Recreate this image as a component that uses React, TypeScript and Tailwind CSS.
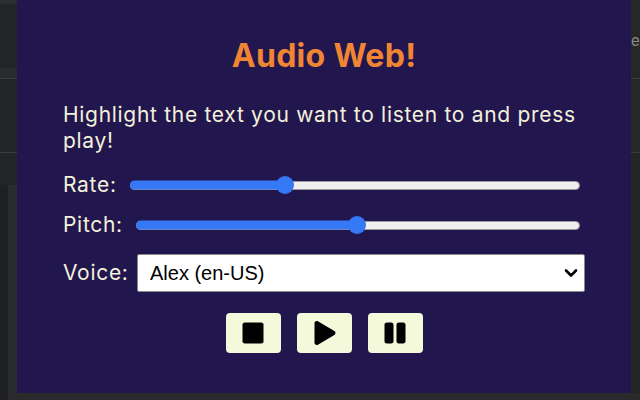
import React from "react";
import { FaStop, FaPlay, FaPause } from "react-icons/fa";

function Slider({ pct }: { pct: number }) {
  return (
    <div className="relative flex h-[18px] flex-1 items-center">
      <div className="h-[9px] w-full rounded-full border border-[#9a9a9a] bg-[#efefef]" />
      <div
        className="absolute left-0 top-1/2 h-[9px] -translate-y-1/2 rounded-l-full bg-[#3478f6]"
        style={{ width: `${pct}%` }}
      />
      <div
        className="absolute top-1/2 h-[18px] w-[18px] -translate-x-1/2 -translate-y-1/2 rounded-full bg-[#3478f6]"
        style={{ left: `${pct}%` }}
      />
    </div>
  );
}

export default function App() {
  return (
    <div
      className="flex h-[400px] w-[640px] flex-col overflow-hidden bg-[#232427]"
      style={{ fontFamily: "Inter, 'Noto Sans', sans-serif" }}
    >
      <div className="flex h-[393px]">
        {/* left page strip */}
        <div className="flex w-[17px] flex-col">
          <div className="h-[4px] bg-[#2c2d30]" />
          <div className="h-[64px] bg-[#232427]" />
          <div className="h-[10px] bg-[#2a2b2e]" />
          <div className="h-px bg-[#3b3c3f]" />
          <div className="h-[73px] bg-[#232427]" />
          <div className="h-px bg-[#3a3b3e]" />
          <div className="h-[32px] bg-[#232427]" />
          <div className="flex flex-1">
            <div className="w-[8px] bg-[#1f2023]" />
            <div className="flex-1 bg-[#2a2b2d]" />
          </div>
        </div>

        {/* popup panel */}
        <div className="flex w-[614px] flex-col bg-[#22164f] px-[46px]">
          <h1 className="mt-[37px] text-center text-[32px] font-bold leading-[38px] tracking-[0.3px] text-[#f08533]">
            Audio Web!
          </h1>
          <p className="mt-[27px] text-[21px] leading-[26px] tracking-[0.7px] text-[#f3f1d9]">
            Highlight the text you want to listen to and press play!
          </p>

          <div className="mt-[19px] flex h-[24px] items-center text-[21px] tracking-[0.7px] text-[#f3f1d9]">
            <span className="w-[67px]">Rate:</span>
            <div className="mr-[5px] flex flex-1">
              <Slider pct={34.4} />
            </div>
          </div>

          <div className="mt-[16px] flex h-[24px] items-center text-[21px] tracking-[0.7px] text-[#f3f1d9]">
            <span className="w-[73px]">Pitch:</span>
            <div className="mr-[5px] flex flex-1">
              <Slider pct={49.8} />
            </div>
          </div>

          <div className="mt-[17px] flex h-[38px] items-center text-[21px] tracking-[0.7px] text-[#f3f1d9]">
            <span className="w-[74px]">Voice:</span>
            <div className="relative h-[38px] flex-1">
              <select
                className="h-full w-full appearance-none rounded-[2px] border border-[#8a8a8a] bg-white pl-[12px] text-[20px] tracking-normal text-black outline-none"
                style={{ fontFamily: "'Liberation Sans', Arial, sans-serif" }}
                defaultValue="alex"
              >
                <option value="alex">Alex (en-US)</option>
              </select>
              <svg
                className="pointer-events-none absolute right-[7px] top-1/2 -translate-y-1/2"
                width="14"
                height="10"
                viewBox="0 0 14 10"
              >
                <path d="M2 2.5 L7 7.5 L12 2.5" fill="none" stroke="#000" strokeWidth="2.6" strokeLinecap="round" strokeLinejoin="round" />
              </svg>
            </div>
          </div>

          <div className="mt-[21px] flex justify-center gap-[16px]">
            <button className="flex h-[40px] w-[55px] items-center justify-center rounded-[4px] bg-[#f4f9dc]">
              <FaStop size={24} color="#000" />
            </button>
            <button className="flex h-[40px] w-[55px] items-center justify-center rounded-[4px] bg-[#f4f9dc]">
              <FaPlay size={24} color="#000" className="ml-[2px]" />
            </button>
            <button className="flex h-[40px] w-[55px] items-center justify-center rounded-[4px] bg-[#f4f9dc]">
              <FaPause size={24} color="#000" />
            </button>
          </div>
        </div>

        {/* right page strip */}
        <div className="flex w-[9px] flex-col bg-[#262729]">
          <div className="flex h-[78px] items-start overflow-hidden">
            <span className="mt-[32px] whitespace-nowrap text-[15px] leading-[18px] text-[#8c8c8c]">er</span>
          </div>
          <div className="h-px bg-[#3b3c3f]" />
          <div className="h-[73px]" />
          <div className="h-px bg-[#3a3b3e]" />
          <div className="flex-1 bg-[#242527]" />
        </div>
      </div>
      <div className="flex h-[7px]">
        <div className="w-[8px] bg-[#1f2023]" />
        <div className="flex-1 bg-[#2a2a2c]" />
      </div>
    </div>
  );
}
